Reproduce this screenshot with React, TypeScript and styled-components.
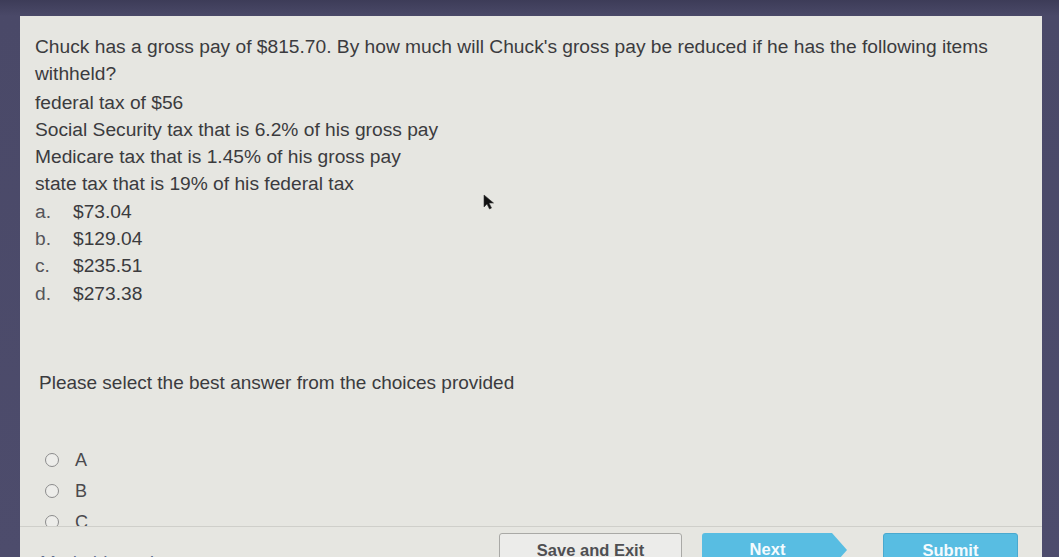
import React from "react";
import styled, { createGlobalStyle } from "styled-components";

const GlobalStyle = createGlobalStyle`
  html, body {
    margin: 0;
    padding: 0;
    background-color: #4b4a69;
    font-family: "Liberation Sans", Arial, sans-serif;
  }
`;

const Screen = styled.div`
  position: relative;
  width: 1059px;
  height: 557px;
  overflow: hidden;
  box-sizing: border-box;
  padding: 16px 17px 0 20px;
  background: linear-gradient(#3d3c58 0px, #4a4968 16px, #4d4c6c 100%);
  display: flex;
`;

const Panel = styled.div`
  flex: 1;
  display: flex;
  flex-direction: column;
  background-color: #e6e6e1;
`;

const Content = styled.div`
  flex-shrink: 0;
  height: 510px;
  box-sizing: border-box;
  overflow: hidden;
  padding: 17px 15px 0 15px;
  color: #3b3b3e;
  font-size: 19.2px;
  line-height: 27.3px;
`;

const Line = styled.div`
  white-space: nowrap;
`;

const QuestionText = styled.div`
  max-width: 965px;
  margin-bottom: 1px;
`;

const Choices = styled.ol`
  list-style: none;
  margin: 0;
  padding: 0;
`;

const Choice = styled.li`
  display: flex;
`;

const ChoiceLetter = styled.span`
  width: 38px;
  color: #55555a;
`;

const Prompt = styled.div`
  margin: 62px 0 0 4px;
  font-size: 19px;
`;

const RadioGroup = styled.div`
  display: flex;
  flex-direction: column;
  gap: 3px;
  margin: 50px 0 0 10px;
`;

const RadioRow = styled.label`
  display: flex;
  align-items: center;
  height: 28px;
  gap: 16px;
  color: #4a4a4e;
  font-size: 18px;
`;

const RadioCircle = styled.span`
  width: 12px;
  height: 12px;
  border-radius: 50%;
  border: 1.5px solid #8c8c8c;
  background-color: #ededea;
`;

const Footer = styled.div`
  flex: 1;
  border-top: 1px solid #cfcfca;
  display: flex;
  align-items: flex-start;
  padding: 6px 24px 0 20px;
  box-sizing: border-box;
  overflow: hidden;
`;

const MarkLink = styled.span`
  margin-top: 19px;
  font-size: 19px;
  color: #5c6a8c;
`;

const ButtonGroup = styled.div`
  margin-left: auto;
  display: flex;
  gap: 20px;
`;

const Button = styled.button<{ $primary?: boolean; $width: number }>`
  flex-shrink: 0;
  width: ${(p) => p.$width}px;
  height: 34px;
  border-radius: 3px;
  border: 1px solid ${(p) => (p.$primary ? "#4aa9cf" : "#a9a9a6")};
  background-color: ${(p) => (p.$primary ? "#58bde2" : "#ececea")};
  color: ${(p) => (p.$primary ? "#f4fbfe" : "#4f4f52")};
  font-family: "Liberation Sans", Arial, sans-serif;
  font-size: 16.5px;
  font-weight: bold;
  padding: 7px 0 0 0;
  display: flex;
  justify-content: center;
  align-items: flex-start;
`;

const NextButton = styled(Button)`
  margin-right: 16px;
  border: none;
  padding-right: 14px;
  clip-path: polygon(0 0, calc(100% - 15px) 0, 100% 50%, calc(100% - 15px) 100%, 0 100%);
`;

const Cursor = styled.svg`
  position: absolute;
  left: 483px;
  top: 194px;
`;

const answers = [
  { letter: "a.", value: "$73.04" },
  { letter: "b.", value: "$129.04" },
  { letter: "c.", value: "$235.51" },
  { letter: "d.", value: "$273.38" },
];

export default function App() {
  return (
    <>
      <GlobalStyle />
      <Screen>
        <Panel>
          <Content>
            <QuestionText>
              Chuck has a gross pay of $815.70. By how much will Chuck's gross pay be reduced if he has the following items
              withheld?
            </QuestionText>
            <Line>federal tax of $56</Line>
            <Line>Social Security tax that is 6.2% of his gross pay</Line>
            <Line>Medicare tax that is 1.45% of his gross pay</Line>
            <Line>state tax that is 19% of his federal tax</Line>
            <Choices>
              {answers.map((a) => (
                <Choice key={a.letter}>
                  <ChoiceLetter>{a.letter}</ChoiceLetter>
                  <span>{a.value}</span>
                </Choice>
              ))}
            </Choices>
            <Prompt>Please select the best answer from the choices provided</Prompt>
            <RadioGroup>
              {["A", "B", "C"].map((l) => (
                <RadioRow key={l}>
                  <RadioCircle />
                  {l}
                </RadioRow>
              ))}
            </RadioGroup>
          </Content>
          <Footer>
            <MarkLink>Mark this and return</MarkLink>
            <ButtonGroup>
              <Button $width={183}>Save and Exit</Button>
              <NextButton $primary $width={145}>Next</NextButton>
              <Button $primary $width={135}>Submit</Button>
            </ButtonGroup>
          </Footer>
        </Panel>
        <Cursor width="12" height="16" viewBox="0 0 12 16">
          <path d="M1 1 L1 13 L4 10 L6.5 15 L8.5 14 L6 9 L10.5 9 Z" fill="#111" stroke="#333" strokeWidth="0.6" />
        </Cursor>
      </Screen>
    </>
  );
}
